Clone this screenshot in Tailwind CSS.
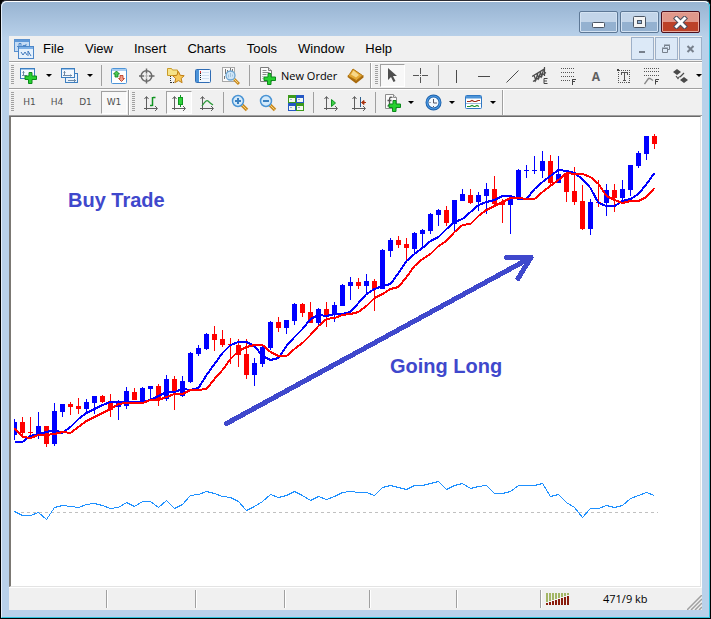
<!DOCTYPE html>
<html lang="en">
<head>
<meta charset="utf-8">
<meta name="viewport" content="width=device-width, initial-scale=1">
<title>Trading terminal</title>
<script src="https://cdn.jsdelivr.net/npm/@tailwindcss/browser@4"></script>
</head>
<body class="h-screen bg-black font-['Liberation_Sans',sans-serif] text-black">
<div class="flex h-full flex-col overflow-hidden rounded-t-md border border-t-[#2b2b33] border-black bg-[#b9d1ea]">
<div class="flex min-h-0 flex-1 flex-col rounded-t-md border border-t-white border-r-[#2fc3dc] border-b-[#2fc3dc] border-l-[#e4eefa] bg-linear-to-b from-[#98b4d2] to-[#b9d1ea] to-[36px] px-[7px] pb-[7px]">

  <!-- Title bar -->
  <header class="flex h-[34px] shrink-0 items-start justify-end gap-0.5 pt-[9px] pr-0.5">
    <button aria-label="Minimize" class="flex h-[22px] w-[39px] items-center justify-center rounded-xs border border-[#5d7896] bg-linear-to-b from-[#c3d5e9] from-50% to-[#94b1d0] to-50% shadow-[inset_0_0_0_1px_#d3e2f2]">
      <svg width="13" height="14"><rect x=".5" y="7.500" width="12" height="5" rx="1" fill="#fff" stroke="#4b5563"/></svg>
    </button>
    <button aria-label="Maximize" class="flex h-[22px] w-[39px] items-center justify-center rounded-xs border border-[#5d7896] bg-linear-to-b from-[#c3d5e9] from-50% to-[#94b1d0] to-50% shadow-[inset_0_0_0_1px_#d3e2f2]">
      <svg width="13" height="12"><rect x=".5" y=".5" width="12" height="11" rx="1" fill="#f4f4f4" stroke="#4b5563"/><rect x="4.500" y="4.500" width="4" height="3" fill="#8fb0d3" stroke="#4b5563"/></svg>
    </button>
    <button aria-label="Close" class="flex h-[22px] w-[39px] items-center justify-center rounded-xs border border-[#4c0f1c] bg-linear-to-b from-[#e0988b] from-50% to-[#bc4128] to-50% shadow-[inset_0_0_0_1px_#e7aa9e]">
      <svg width="15" height="13" fill="none"><path d="M3.500 2.500l8 8M11.500 2.500l-8 8" stroke="#4b5060" stroke-width="5" stroke-linecap="square"/><path d="M3.500 2.500l8 8M11.500 2.500l-8 8" stroke="#fff" stroke-width="3" stroke-linecap="square"/></svg>
    </button>
  </header>

  <!-- Menu bar -->
  <nav class="flex h-[26px] shrink-0 items-center border-b border-[#a0a0a0] bg-[#f0f0f0] pl-[5px] text-[13px]" aria-label="Main menu">
    <svg class="mr-[9px] shrink-0" width="20" height="20">
      <rect x=".5" y=".5" width="15" height="12" fill="#c6dcf4" stroke="#5b92d0"/><path d="M1 1h14v2H1z" fill="#5f98d8"/><path d="M3 7.500h2v-3h2v5h2v-3h3V5" fill="none" stroke="#4c86c8"/>
      <rect x="4.500" y="7.500" width="15" height="12" fill="#e4f0fc" stroke="#4c86c8"/><path d="M5 8h14v2H5z" fill="#7db0e6"/><path d="M7 13l2 3 2-3 2 3M14 17v-5l3 5" fill="none" stroke="#3f78bc"/>
    </svg>
    <div class="flex flex-1 gap-[21px]">
      <button>File</button><button>View</button><button>Insert</button><button>Charts</button><button>Tools</button><button>Window</button><button>Help</button>
    </div>
    <div class="flex gap-px">
      <button aria-label="Minimize chart" class="flex h-[23px] w-[23px] items-center justify-center border border-[#9db0c8] bg-[#dce9f7]"><svg width="11" height="11" shape-rendering="crispEdges"><path d="M2 8h6v2H2z" fill="#77808c"/></svg></button>
      <button aria-label="Restore chart" class="flex h-[23px] w-[23px] items-center justify-center border border-[#9db0c8] bg-[#dce9f7]"><svg width="11" height="11" fill="none" stroke="#77808c"><path d="M3.500 4V2.500h5v4H7M3 2h6" /><path d="M1.500 5.500h5v4h-5zM1 5h6"/></svg></button>
      <button aria-label="Close chart" class="flex h-[23px] w-[23px] items-center justify-center border border-[#9db0c8] bg-[#dce9f7]"><svg width="11" height="11"><path d="M2.500 3l6 6M8.500 3l-6 6" stroke="#77808c" stroke-width="2"/></svg></button>
    </div>
  </nav>

  <!-- Standard and drawing tools -->
  <div role="toolbar" aria-label="Standard" class="flex h-[27px] shrink-0 items-center overflow-hidden border-t border-b border-t-white border-b-[#a0a0a0] bg-[#f0f0f0] *:shrink-0">
    <svg width="7" height="21"><path d="M3.500 0v20" stroke="#a0a0a0" stroke-width="3" stroke-dasharray="1 1"/></svg>
    <button aria-label="New chart" class="flex w-[26px] justify-center"><svg width="18" height="18">
      <rect x=".5" y="1.500" width="14" height="10" fill="#f4f9fe" stroke="#3d7fc0"/><path d="M1 2h13v1H1z" fill="#9cc4ec"/><path d="M3.500 4v5M2.500 5.500h2M2 8.500h5M10 5.500h2" fill="none" stroke="#6f8aa6"/>
      <path d="M9 5.500h3v3.500h4.500v3.500H12v4H8.500v-4H5V9h4z" fill="#27d02f" stroke="#0c8a1c"/></svg></button>
    <button aria-label="New chart options" class="flex w-[13px] justify-center"><svg width="6" height="3"><path d="M0 0h6L3 3z"/></svg></button>
    <button aria-label="Profiles" class="flex w-[29px] justify-center"><svg width="18" height="18">
      <rect x="4.500" y="6.500" width="12" height="9" fill="#e8f2fc" stroke="#3d7fc0"/><rect x=".5" y="1.500" width="13" height="9" fill="#f4f9fe" stroke="#3d7fc0"/><path d="M1 2h12v1H1z" fill="#9cc4ec"/><path d="M3.500 4v4M2.500 5.500h2M2 8.500h9M9.500 7.500v2M7 13.500h8M13.500 12v3" fill="none" stroke="#6f8aa6"/></svg></button>
    <button aria-label="Profile options" class="flex w-3 justify-center"><svg width="6" height="3"><path d="M0 0h6L3 3z"/></svg></button>
    <span class="mr-[3px] ml-[5px] h-[21px] w-px bg-[#a0a0a0]"></span>
    <button aria-label="Market watch" class="flex w-7 justify-center"><svg width="16" height="16">
      <rect x=".5" y=".5" width="15" height="15" rx="1" fill="#fff" stroke="#4d94d8"/><path d="M1 1h14v2H1z" fill="#a9cdf0"/><path d="M5.500 3l3 3H7v3H4V6H2.500z" fill="#4cc855" stroke="#0d7d1a" stroke-width=".8"/><path d="M10.500 13.500l3-3H12v-3H9v3H7.500z" fill="#f5a08a" stroke="#b53018" stroke-width=".8"/></svg></button>
    <button aria-label="Data window" class="flex w-7 justify-center"><svg width="16" height="16" fill="none" stroke="#6a6a6a"><circle cx="7.500" cy="8" r="5.300" stroke-width="1.500"/><path d="M7.500 .5v5M7.500 10.500v5M0 8h5M10 8h5.500" stroke-width="1.500"/><path d="M7.500 6v4M5.500 8h4" stroke="#b0b0b0"/></svg></button>
    <button aria-label="Navigator" class="flex w-7 justify-center"><svg width="19" height="18">
      <path d="M1.500 8.500v-7h4l1 1.500h5v5.500z" fill="#f6e389" stroke="#c99b2a"/><path d="M4.500 9v7M5 15.500h4" fill="none" stroke="#333" stroke-dasharray="1 1"/><path d="M12.500 4.500l1.700 3.800 4 .4-3 2.800.9 4.200-3.600-2.100-3.700 2.100.9-4.200-3-2.800 4.100-.4z" fill="#f7c95a" stroke="#c07f15"/></svg></button>
    <button aria-label="Terminal" class="flex w-7 justify-center"><svg width="17" height="16"><rect x=".5" y="1.500" width="15" height="13" rx="1" fill="#f2f8ff" stroke="#2f6cb4"/><path d="M1 2h3v12H1z" fill="#4d94d8"/><path d="M5.500 3v10" stroke="#222" stroke-dasharray="1 1"/><path d="M7 4.500h7M7 7.500h7M7 10.500h7" stroke="#cfe0f2"/><path d="M5 3h1v2H5z" fill="#d33"/></svg></button>
    <button aria-label="Strategy tester" class="flex w-7 justify-center"><svg width="18" height="18"><rect x=".5" y=".5" width="12" height="14" fill="#fafafa" stroke="#a8a8a8"/><path d="M3.500 2v5M5.500 3v3M8.500 1v4M10.500 2v3M2.500 9v3" stroke="#777"/><path d="M12 12l5 5" stroke="#c98a22" stroke-width="3"/><path d="M12 12l4 4" stroke="#f6d67c"/><circle cx="8.500" cy="8.500" r="4.500" fill="#cfe6f8" stroke="#6fa6d2" stroke-width="1.300"/><path d="M6.500 7.500v3M8.500 6v4M10.500 7.500v2" fill="none" stroke="#a3c3dc"/></svg></button>
    <span class="mx-1 h-[21px] w-px bg-[#a0a0a0]"></span>
    <button class="flex w-[87px] items-center gap-1 pl-[5px] font-['Open_Sans',sans-serif] text-[11px] leading-4 whitespace-nowrap"><svg class="shrink-0" width="18" height="18">
      <path d="M1.500.5h8l3 3v11h-11z" fill="#fafafa" stroke="#7c7c7c"/><path d="M9.500.5v3h3" fill="#ddd" stroke="#7c7c7c"/><path d="M3.500 3.500h4M3.500 5.500h7M3.500 7.500h4M3.500 9.500h1M3.500 11.500h1" stroke="#8a8a8a"/>
      <path d="M9 6.500h3V10h4.500v3.500H12v4H8.500v-4H5V10h4z" fill="#27d02f" stroke="#0c8a1c"/></svg>New Order</button>
    <button aria-label="MetaEditor" class="flex w-7 justify-center"><svg width="17" height="16"><path d="M.5 9l8.500 6.500 7.500-6V7L9 12.500 1 7z" fill="#a8690c"/><path d="M6 1l9.500 6.500-6 5L1 8c2-2 3-4 5-7z" fill="#e3a733" stroke="#b0740f"/><path d="M6.500 2.500L4 6.500l5 3L12 7z" fill="#f7d88a"/></svg></button>
    <span class="ml-px h-full w-0.5 border-l border-[#a0a0a0] bg-white"></span>
    <svg width="8" height="21"><path d="M4.500 0v20" stroke="#a0a0a0" stroke-width="3" stroke-dasharray="1 1"/></svg>
    <button aria-label="Cursor" aria-pressed="true" class="flex h-[23px] w-[25px] items-center justify-center border border-t-[#a0a0a0] border-r-white border-b-white border-l-[#a0a0a0] bg-[#f8f8f8]"><svg width="11" height="15"><path d="M1 0v12l3-3 2.500 5 2-1L6 8h4z" fill="#4f4f4f"/></svg></button>
    <button aria-label="Crosshair" class="ml-px flex w-7 justify-center"><svg width="15" height="15" shape-rendering="crispEdges"><path d="M7.500 0v6M7.500 9v6M0 7.500h6M9 7.500h6M7 7.500h1" stroke="#555"/></svg></button>
    <span class="mr-[3px] ml-1 h-[21px] w-px bg-[#a0a0a0]"></span>
    <button aria-label="Vertical line" class="flex w-7 justify-center"><svg width="14" height="14"><path d="M7.500 1v13" stroke="#4a4a4a"/></svg></button>
    <button aria-label="Horizontal line" class="flex w-7 justify-center"><svg width="12" height="14"><path d="M0 7.500h12" stroke="#4a4a4a"/></svg></button>
    <button aria-label="Trendline" class="flex w-7 justify-center"><svg width="13" height="14"><path d="M.5 13.500L12.500 1.500" stroke="#4a4a4a"/></svg></button>
    <button aria-label="Equidistant channel" class="flex w-7 justify-center"><svg width="16" height="18"><path d="M0 9.500L13 1.500M1 14.500L14 5.500M3 15l3-9M6 13l3-9M9 11l2.500-8M12.500 9V0M2 8l2 6M5 6l2 6M8 4l2 6" fill="none" stroke="#4a4a4a" stroke-width="1.200"/><path d="M15.500 11.500H12v5h3.500M12 14h3" fill="none" stroke="#444"/></svg></button>
    <button aria-label="Fibonacci retracement" class="flex w-7 justify-center"><svg width="15" height="18" shape-rendering="crispEdges"><path d="M0 1.500h14M0 5.500h14M0 9.500h14M0 13.500h9" stroke="#555" stroke-dasharray="1 1"/><path d="M15 12.500H11.500v5M11 14.500h3" fill="none" stroke="#444"/></svg></button>
    <button aria-label="Text" class="flex w-7 justify-center pt-0.5 font-['Open_Sans',sans-serif] text-[12px] leading-4 font-bold text-[#606060]">A</button>
    <button aria-label="Text label" class="flex w-7 justify-center"><svg width="14" height="16" shape-rendering="crispEdges"><path d="M1.500 2.500h11v12h-11z" fill="none" stroke="#555" stroke-dasharray="1 1"/><path d="M0 1h2v2H0z" fill="#444"/><path d="M4 4h7v3h-1V5H8v7h1v1H6v-1h1V5H5v2H4z" fill="#555"/></svg></button>
    <button aria-label="Fibonacci fan" class="flex w-7 justify-center"><svg width="16" height="18"><path d="M0 1.500h16M0 4.500h16M0 8.500h16" stroke="#555" stroke-dasharray="1 1"/><path d="M.5 17l4-5.500H6l3 2" fill="none" stroke="#888" stroke-width="1.300"/><path d="M15 12.500h-3.500v5M11 14.500h3" fill="none" stroke="#444"/></svg></button>
    <button aria-label="Arrows" class="flex w-7 justify-center"><svg width="15" height="14"><path d="M4 0l4 3-4 3-4-3zM11 8l4 3-4 3-4-3z" fill="#4a4a4a"/><path d="M3 7l2 2.500 1.500-2M7 8l4-4" fill="none" stroke="#4a4a4a" stroke-width="1.200"/></svg></button>
    <button aria-label="Arrow options" class="flex w-2 justify-end"><svg width="6" height="3"><path d="M0 0h6L3 3z"/></svg></button>
  </div>

  <!-- Timeframes and chart tools -->
  <div role="toolbar" aria-label="Periodicity and charts" class="flex h-[27px] shrink-0 items-center overflow-hidden border-t border-b border-t-white border-b-[#a0a0a0] bg-[#f0f0f0] *:shrink-0">
    <svg width="7" height="21"><path d="M3.500 0v20" stroke="#a0a0a0" stroke-width="3" stroke-dasharray="1 1"/></svg>
    <div class="mr-px flex pt-px font-['DejaVu_Sans',sans-serif] text-[9px] text-[#505050]">
      <button class="w-[27px]">H1</button><button class="w-7">H4</button><button class="w-[29px]">D1</button>
    </div>
    <button aria-pressed="true" class="h-[23px] w-[26px] border border-t-[#a0a0a0] border-r-white border-b-white border-l-[#a0a0a0] bg-[#f8f8f8] pt-px font-['DejaVu_Sans',sans-serif] text-[9px] text-[#505050]">W1</button>
    <span class="ml-px h-full w-0.5 border-l border-[#a0a0a0] bg-white"></span>
    <svg width="7" height="21"><path d="M3.500 0v20" stroke="#a0a0a0" stroke-width="3" stroke-dasharray="1 1"/></svg>
    <button aria-label="Bar chart" class="flex w-7 justify-center"><svg width="14" height="16"><path d="M2.500 2v13M0 13.500h13M.5 4l2-2.500 2 2.500M11 11l2.500 2.500L11 16" fill="none" stroke="#5e5e5e"/><path d="M8.500 2v9M9 2.500h2.500M6 10.500h2.500" stroke="#119422" stroke-width="1.500"/></svg></button>
    <button aria-label="Candlesticks" aria-pressed="true" class="mx-px flex h-[23px] w-[26px] items-center justify-center border border-t-[#a0a0a0] border-r-white border-b-white border-l-[#a0a0a0] bg-[#f8f8f8]"><svg width="14" height="16"><path d="M2.500 2v13M0 13.500h13M.5 4l2-2.500 2 2.500M11 11l2.500 2.500L11 16" fill="none" stroke="#5e5e5e"/><path d="M8.500 0v12" stroke="#119422"/><rect x="6.500" y="2.500" width="4" height="7" fill="#2fd23a" stroke="#119422"/></svg></button>
    <button aria-label="Line chart" class="flex w-7 justify-center"><svg width="14" height="16"><path d="M2.500 2v13M0 13.500h13M.5 4l2-2.500 2 2.500M11 11l2.500 2.500L11 16" fill="none" stroke="#5e5e5e"/><path d="M2 11c3-5 5-6 6-5s2 2 5 4" fill="none" stroke="#2c9a3a" stroke-width="1.300"/></svg></button>
    <span class="mx-0.5 h-[21px] w-px bg-[#a0a0a0]"></span>
    <button aria-label="Zoom in" class="flex w-7 justify-center"><svg width="18" height="18"><path d="M11 11l5 5" stroke="#c98a22" stroke-width="3.500"/><path d="M11 11l4.500 4.500" stroke="#f6d67c"/><circle cx="7" cy="7" r="5.500" fill="#d4eafa" stroke="#4a94d4" stroke-width="1.500"/><path d="M4 7h6M7 4v6" stroke="#3a80c0" stroke-width="2"/></svg></button>
    <button aria-label="Zoom out" class="flex w-7 justify-center"><svg width="18" height="18"><path d="M11 11l5 5" stroke="#c98a22" stroke-width="3.500"/><path d="M11 11l4.500 4.500" stroke="#f6d67c"/><circle cx="7" cy="7" r="5.500" fill="#d4eafa" stroke="#4a94d4" stroke-width="1.500"/><path d="M4 7h6" stroke="#3a80c0" stroke-width="2"/></svg></button>
    <button aria-label="Tile windows" class="flex w-7 justify-center"><svg width="16" height="16"><path d="M0 0h8v8H0zM8 8h8v8H8z" fill="#3c9a1c"/><path d="M8 0h8v8H8zM0 8h8v8H0z" fill="#2558c4"/><path d="M1 3h6v4H1zM9 3h6v4H9zM1 11h6v4H1zM9 11h6v4H9z" fill="#f4faf0"/><path d="M2 4.500h2M10 4.500h2M2 12.500h2M10 12.500h2" stroke="#9fb2cc"/></svg></button>
    <span class="mx-[3px] h-[21px] w-px bg-[#a0a0a0]"></span>
    <button aria-label="Auto scroll" class="flex w-7 justify-center"><svg width="14" height="16"><path d="M2.500 2v13M0 13.500h13M.5 4l2-2.500 2 2.500M11 11l2.500 2.500L11 16" fill="none" stroke="#5e5e5e"/><path d="M7.500 4.500l4 3.500-4 3.500z" fill="#3fd048" stroke="#119422"/></svg></button>
    <button aria-label="Chart shift" class="flex w-7 justify-center"><svg width="14" height="16"><path d="M2.500 2v13M0 13.500h13M.5 4l2-2.500 2 2.500M11 11l2.500 2.500L11 16" fill="none" stroke="#5e5e5e"/><path d="M8.500 2v10" stroke="#2c5f8f"/><path d="M14 7.500h-3M9.500 7.500l2.500-2v4z" fill="#a8320f" stroke="#a8320f"/></svg></button>
    <span class="mr-[3px] ml-0.5 h-[21px] w-px bg-[#a0a0a0]"></span>
    <button aria-label="Indicators" class="flex w-7 justify-center"><svg width="18" height="18">
      <path d="M1.500.5h8l3 3v11h-11z" fill="#fafafa" stroke="#8c8c8c"/><path d="M9.500.5v3h3" fill="#ddd" stroke="#8c8c8c"/><path d="M8.500 3.500c-2-1-3 0-3 2v4c0 2-.5 2.500-2 2.500M3.500 6.500h4" fill="none" stroke="#555" stroke-width="1.300"/>
      <path d="M9 6.500h3V10h4.500v3.500H12v4H8.500v-4H5V10h4z" fill="#27d02f" stroke="#0c8a1c"/></svg></button>
    <button aria-label="Indicator options" class="flex w-3 justify-start pl-px"><svg width="6" height="3"><path d="M0 0h6L3 3z"/></svg></button>
    <button aria-label="Periods" class="flex w-7 justify-center"><svg width="17" height="17"><circle cx="8.500" cy="8.500" r="6.500" fill="#f2f8fd" stroke="#1c5fa8" stroke-width="3"/><circle cx="8.500" cy="8.500" r="6.500" fill="none" stroke="#4c9be6" stroke-width="1.200"/><path d="M8.500 5v4H12M8.500 12v1M4.500 8.500h1" fill="none" stroke="#556"/></svg></button>
    <button aria-label="Period options" class="flex w-3 justify-start pl-0.5"><svg width="6" height="3"><path d="M0 0h6L3 3z"/></svg></button>
    <button aria-label="Templates" class="flex w-7 justify-center"><svg width="17" height="15"><rect x=".5" y=".5" width="16" height="13" rx="1" fill="#fff" stroke="#2f78c4"/><path d="M1 1h15v2.500H1z" fill="#4d94d8"/><path d="M1 8.500h15" stroke="#9dbbd8"/><path d="M2 6.500h3l2-1 2 1h2l2-1h2" fill="none" stroke="#a02818" stroke-width="1.200"/><path d="M2 11.500h3l2-1 2 1h1l2-1 2 1" fill="none" stroke="#1f9430" stroke-width="1.200"/></svg></button>
    <button aria-label="Template options" class="flex w-3 justify-center"><svg width="6" height="3"><path d="M0 0h6L3 3z"/></svg></button>
    <span class="ml-[3px] h-full w-0.5 border-l border-[#a0a0a0] bg-white"></span>
  </div>

  <!-- Chart -->
  <main class="flex min-h-0 flex-1 flex-col border-r border-white bg-white">
    <div class="min-h-0 flex-1 border-t border-r border-b border-l-2 border-t-[#696969] border-r-[#e3e3e3] border-b-[#e3e3e3] border-l-[#7b7873] bg-white">
      <svg class="block h-full w-full" viewBox="11 117 689 469" preserveAspectRatio="xMinYMin meet" role="img" aria-label="Price chart">
        <path d="M15 512.500H658" stroke="#c0c0c0" stroke-dasharray="3 3" shape-rendering="crispEdges"/>
        <g id="candles" shape-rendering="crispEdges"></g>
        <g fill="none" stroke-linejoin="round" shape-rendering="crispEdges">
          <polyline id="fast" stroke="#0000ff" stroke-width="2"/>
          <polyline id="slow" stroke="#ff0000" stroke-width="2"/>
          <polyline id="osc" stroke="#1e90ff" stroke-width="1"/>
        </g>
        <g fill="none" stroke="#3f48cc" stroke-width="5" stroke-linecap="round" stroke-linejoin="round" shape-rendering="crispEdges">
          <path d="M226.500 423.500L531 257.500M506.500 257.500H531L518 278.500"/>
        </g>
        <g fill="#3f48cc" font-family="Liberation Sans, sans-serif" font-weight="700" font-size="20">
          <text x="68" y="207">Buy Trade</text>
          <text x="390" y="373">Going Long</text>
        </g>
      </svg>
    </div>
  </main>

  <!-- Status bar -->
  <footer class="flex h-[23px] shrink-0 items-center border-t border-white bg-[#f0f0f0] font-['Open_Sans',sans-serif] text-[11px]">
    <span class="h-[18px] flex-1 border-r border-[#a0a0a0] shadow-[1px_0_#fff]"></span>
    <span class="h-[18px] w-[89px] border-r border-[#a0a0a0] shadow-[1px_0_#fff]"></span>
    <span class="h-[18px] w-[89px] border-r border-[#a0a0a0] shadow-[1px_0_#fff]"></span>
    <span class="h-[18px] w-[85px] border-r border-[#a0a0a0] shadow-[1px_0_#fff]"></span>
    <span class="h-[18px] w-[87px] border-r border-[#a0a0a0] shadow-[1px_0_#fff]"></span>
    <span class="h-[18px] w-[84px] border-r border-[#a0a0a0] shadow-[1px_0_#fff]"></span>
    <div class="flex h-full w-[161px] items-center pl-[5px]">
      <svg width="24" height="12" shape-rendering="crispEdges">
        <path d="M0 0h2v9H0zM3 0h2v8H3zM6 0h2v7H6zM9 0h2v6H9zM12 0h2v5h-2zM15 0h2v4h-2zM18 0h2v3h-2zM21 0h2v2h-2z" fill="#a3b565"/>
        <path d="M0 10h2v2H0zM3 9h2v3H3zM6 8h2v4H6zM9 7h2v5H9zM12 6h2v6h-2zM15 5h2v7h-2zM18 4h2v8h-2zM21 3h2v9h-2z" fill="#8a1c0c"/>
      </svg>
      <span class="ml-[33px] flex-1 pt-px">471/9 kb</span>
      <svg class="self-end" width="15" height="15" stroke="#a0a0a0" stroke-width="1.500"><path d="M0 15L15 0M4 15L15 4M8 15l7-7M12 15l3-3"/></svg>
    </div>
  </footer>
</div>
</div>

<script>
// One row per bar: direction (b = up, r = down), high, body top, body bottom, low
const bars = `b 419 422 435 440|r 417 422 433 436|r 417 432 433 435|b 412 426 433 439|r 426 426 444 447|b 403 411 444 446|b 404 404 412 417|r 402 404 407 415|r 398 406 409 414|b 399 402 409 413|b 396 396 403 414|r 395 396 402 403|r 394 401 410 417|b 400 402 407 420|b 387 391 406 409|r 388 392 400 400|b 387 388 402 402|b 386 386 389 400|r 384 386 400 406|b 375 379 399 401|r 376 379 392 410|b 376 381 396 397|b 352 353 382 383|b 345 348 354 356|b 333 334 349 350|r 326 334 340 351|r 330 339 345 347|r 338 344 345 364|r 339 345 355 367|r 339 354 375 379|b 358 363 375 386|b 346 347 364 367|b 321 322 348 350|r 317 322 328 332|b 320 320 328 334|b 303 304 321 325|r 303 304 313 317|r 302 312 323 323|b 308 309 323 326|r 302 309 315 327|b 302 305 315 322|b 284 285 306 306|b 277 282 286 300|r 278 282 286 289|b 274 281 286 294|r 279 281 289 311|b 249 250 289 289|b 238 240 251 257|r 236 240 245 248|r 238 244 248 260|b 232 233 249 253|b 229 230 234 248|b 213 214 231 234|b 209 210 215 226|r 206 210 223 226|b 200 200 224 231|b 189 194 201 201|r 189 195 203 204|b 192 195 202 211|b 183 189 196 214|r 176 189 204 206|r 199 202 205 223|b 195 198 205 234|b 169 170 199 199|b 165 170 171 178|b 156 170 171 174|b 151 161 171 178|r 155 161 183 185|b 156 174 183 183|r 172 174 192 202|r 167 191 202 205|r 185 201 229 230|b 199 202 229 235|r 180 202 203 207|b 184 190 203 216|r 184 190 198 212|b 180 189 198 202|b 165 165 190 196|b 151 153 166 168|b 136 136 154 160|r 134 136 144 149`.split('|').map(r => r.split(' '));
const fast = [442,442,436,434,432,430,433,427,419,413,409,405,402,402,402,402,402,400,396,392,392,389,390,388,375,364,353,345,342,342,346,356,360,358,346,337,329,319,315,316,314,314,312,303,294,289,286,284,273,261,254,248,241,237,229,222,219,212,205,202,200,196,196,199,199,189,182,176,170,171,173,179,188,203,206,206,201,199,194,184,173];
const slow = [428,437,438,435,435,434,432,433,427,421,417,413,409,404,403,403,403,400,400,397,394,394,390,390,389,379,370,359,351,347,345,345,352,356,356,349,343,335,326,319,318,315,314,312,306,298,294,289,287,277,266,259,254,246,241,232,225,224,216,210,206,202,198,198,199,199,192,186,180,173,174,174,177,184,196,200,203,201,201,197,188];
const osc = [511,515,515,512,519,507,505,506,507,504,503,505,508,507,502,506,501,501,507,500,508,504,495,494,491,493,496,497,501,510,506,501,494,497,495,491,495,500,496,499,496,492,491,492,492,495,487,485,487,489,485,485,483,481,489,485,483,488,486,485,493,493,491,485,485,485,483,496,494,502,507,517,508,508,505,507,505,498,495,492,495];
const x0 = 14, step = 8;
document.getElementById('candles').innerHTML = bars.map(([dir, high, top, bottom, low], i) => {
  const x = x0 + i * step, color = dir === 'b' ? '#0000ff' : '#ff0000';
  const left = i ? x - 2 : x, width = i ? 5 : 3;
  return `<rect x="${x}" y="${high}" width="1" height="${low - high}" fill="${color}"/><rect x="${left}" y="${top}" width="${width}" height="${bottom - top}" fill="${color}"/>`;
}).join('');
const plot = (id, values) => document.getElementById(id).setAttribute('points', values.map((v, i) => `${x0 + 0.5 + i * step},${v + (id === 'osc' ? 0.5 : 0)}`).join(' '));
plot('fast', fast);
plot('slow', slow);
plot('osc', osc);
</script>
</body>
</html>
